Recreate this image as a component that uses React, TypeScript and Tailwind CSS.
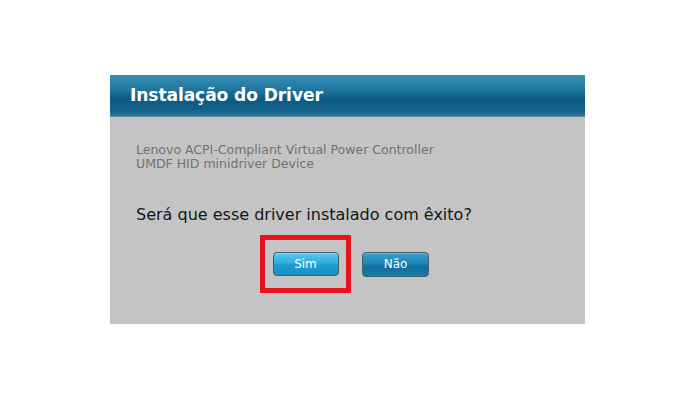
import React from 'react';

const App: React.FC = () => {
  return (
    <div className="w-[695px] h-[398px] bg-white pt-[75px] pl-[110px]">
      <div className="w-[475px] h-[249px] bg-[#c4c4c4] flex flex-col">
        {/* Header */}
        <div className="h-[42px] flex items-center pl-[20px] bg-[linear-gradient(to_bottom,#3a8db2_0%,#1f77a0_35%,#0d5b82_60%,#10608a_85%,#2a7796_100%)] border-b border-[#6a8a98]">
          <h1 className="text-white font-bold text-[17.1px] font-['DejaVu_Sans',sans-serif] tracking-[-0.1px]">
            Instalação do Driver
          </h1>
        </div>

        {/* Body */}
        <div className="pl-[26px] pt-[26px] font-['DejaVu_Sans',sans-serif]">
          <p className="text-[#727272] text-[12.5px] leading-[13.5px]">
            Lenovo ACPI-Compliant Virtual Power Controller
            <br />
            UMDF HID minidriver Device
          </p>
          <p className="mt-[35px] text-[#151515] text-[16px] leading-[20px]">
            Será que esse driver instalado com êxito?
          </p>
        </div>

        <div className="flex items-center mt-[10px] pl-[150px]">
          <div className="w-[91px] h-[58px] border-[5px] border-[#e3141c] flex items-center justify-center">
            <button className="w-[66px] h-[24px] rounded-[4px] border border-[#3f5c68] bg-[linear-gradient(to_bottom,#5cc6ea_0%,#2fb0e0_45%,#1d9bd0_55%,#1a8fc4_100%)] text-white text-[12px] font-['DejaVu_Sans',sans-serif] shadow-[inset_0_1px_0_rgba(255,255,255,0.35)]">
              Sim
            </button>
          </div>
          <button className="ml-[11px] w-[67px] h-[25px] rounded-[4px] border border-[#3f5c68] bg-[linear-gradient(to_bottom,#3a9fcc_0%,#1c86b8_45%,#0f6f9e_60%,#177aa6_100%)] text-white text-[12px] font-['DejaVu_Sans',sans-serif] shadow-[inset_0_1px_0_rgba(255,255,255,0.3)]">
            Não
          </button>
        </div>
      </div>
    </div>
  );
};

export default App;
